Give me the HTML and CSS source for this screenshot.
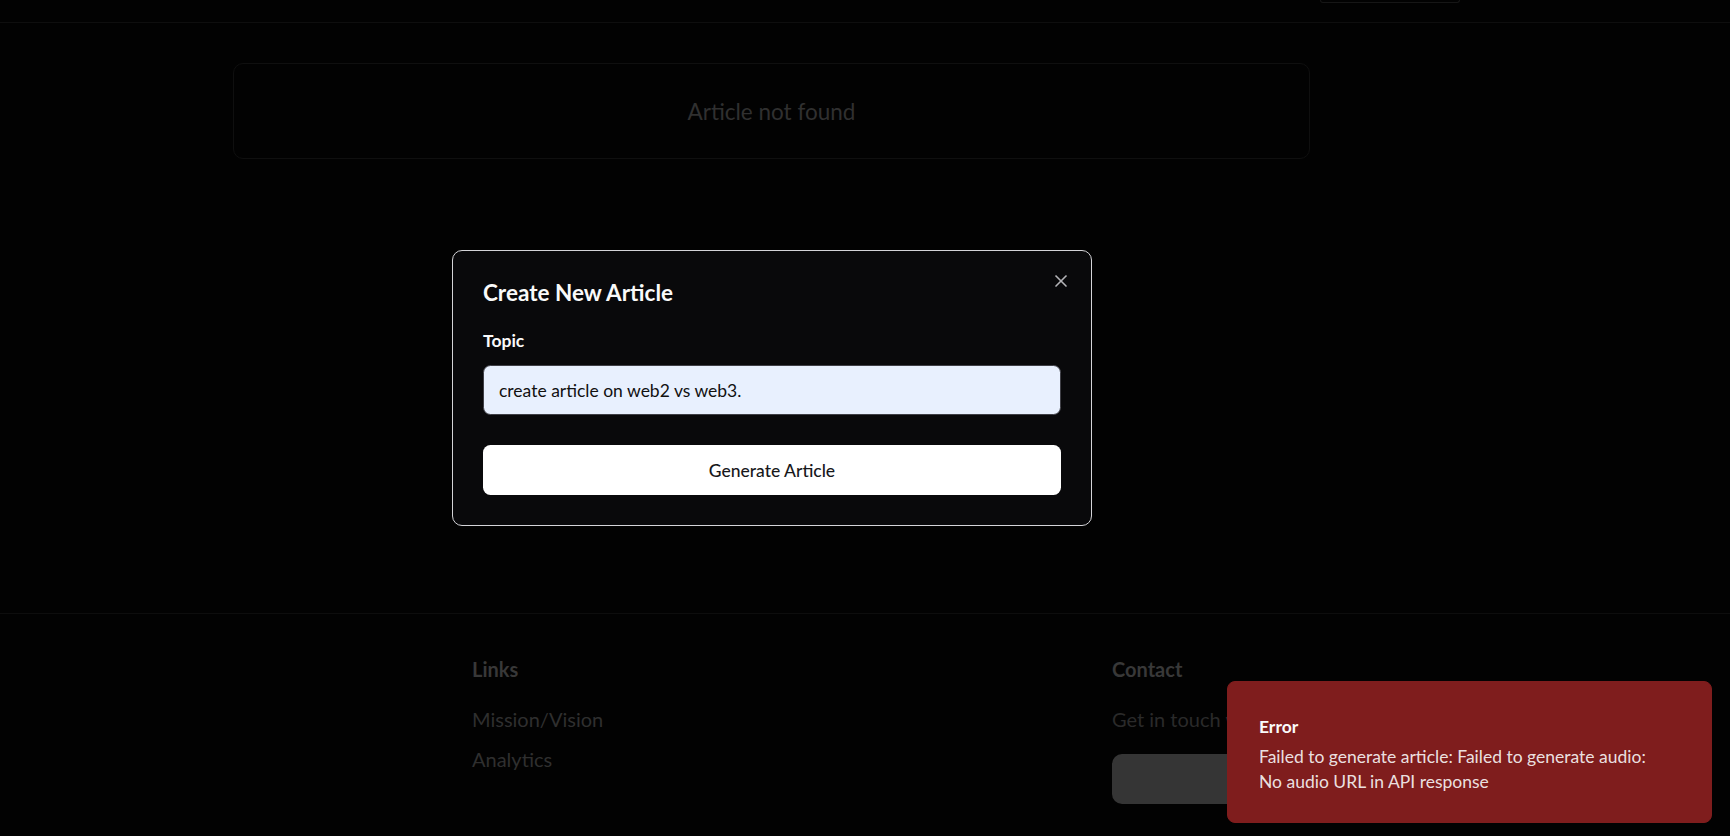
FILE: index.html
```html
<!DOCTYPE html>
<html lang="en">
<head>
<meta charset="utf-8">
<title>Create New Article</title>
<link rel="stylesheet" href="styles.css">
</head>
<body>
<header class="topbar">
  <div class="top-btn"></div>
</header>
<main class="main">
  <div class="card">Article not found</div>
</main>
<footer class="footer">
  <div class="footer-col">
    <h3 class="footer-title">Links</h3>
    <a class="footer-link" href="#">Mission/Vision</a>
    <a class="footer-link" href="#">Analytics</a>
  </div>
  <div class="footer-col">
    <h3 class="footer-title">Contact</h3>
    <p class="footer-text">Get in touch with us</p>
    <div class="footer-btn"></div>
  </div>
</footer>

<div class="modal" role="dialog">
  <h2 class="modal-title">Create New Article</h2>
  <form class="modal-form">
    <label class="label" for="topic">Topic</label>
    <input class="input" id="topic" type="text" value="create article on web2 vs web3.">
    <button class="btn" type="button">Generate Article</button>
  </form>
  <button class="close" type="button" aria-label="Close">
    <svg viewBox="0 0 24 24" width="20" height="20" fill="none" stroke="currentColor" stroke-width="2" stroke-linecap="round" stroke-linejoin="round"><path d="M18 6 6 18"/><path d="m6 6 12 12"/></svg>
  </button>
</div>

<div class="toast">
  <div class="toast-title">Error</div>
  <div class="toast-desc">Failed to generate article: Failed to generate audio: No audio URL in API response</div>
</div>
</body>
</html>
```
FILE: styles.css
```css
* { box-sizing: border-box; }
html, body { margin: 0; padding: 0; }
body {
  background: #020202;
  font-family: "Lato", "Noto Sans", sans-serif;
  color: #fafafa;
  width: 1730px;
  height: 836px;
  overflow: hidden;
}
.topbar {
  height: 23px;
  border-bottom: 1px solid #0e0e0e;
  display: flex;
  justify-content: flex-end;
  padding-right: 270px;
}
.top-btn {
  width: 140px;
  height: 3px;
  border: 1px solid #161616;
  border-top: none;
  border-radius: 0 0 6px 6px;
}
.main {
  height: 590px;
  padding: 40px 0 0 233px;
}
.card {
  width: 1077px;
  height: 96px;
  border: 1px solid #0f0f0f;
  border-radius: 10px;
  display: flex;
  align-items: center;
  justify-content: center;
  color: #303030;
  font-size: 22.5px;
}
.footer {
  border-top: 1px solid #0d0d0d;
  padding: 40px 0 0 472px;
  display: grid;
  grid-template-columns: 640px 400px;
}
.footer-col { display: flex; flex-direction: column; align-items: flex-start; }
.footer-title {
  margin: 0 0 20px;
  font-size: 20px;
  line-height: 30px;
  font-weight: 700;
  color: #383838;
}
.footer-link {
  font-size: 20px;
  line-height: 30px;
  color: #2f2f2f;
  text-decoration: none;
  margin-bottom: 10px;
}
.footer-text {
  margin: 0 0 20px;
  font-size: 20px;
  line-height: 30px;
  color: #2a2a2a;
}
.footer-btn {
  width: 300px;
  height: 50px;
  border-radius: 10px;
  background: #353535;
}
.modal {
  position: fixed;
  left: 452px;
  top: 250px;
  width: 640px;
  padding: 30px;
  background: #09090b;
  border: 1px solid #d4d4d8;
  border-radius: 10px;
}
.modal-title {
  margin: 0;
  font-size: 22.5px;
  line-height: 24px;
  font-weight: 700;
  color: #fafafa;
}
.modal-form { display: flex; flex-direction: column; margin-top: 27px; }
.label {
  font-size: 17.5px;
  line-height: 17.5px;
  font-weight: 700;
  color: #fafafa;
}
.input {
  margin-top: 15.5px;
  height: 50px;
  width: 100%;
  border: 1px solid #3f3f46;
  border-radius: 7.5px;
  background: #e8f0fe;
  color: #111;
  font-family: inherit;
  font-size: 17.5px;
  padding: 0 15px;
  outline: none;
}
.btn {
  margin-top: 30px;
  height: 50px;
  width: 100%;
  border: none;
  border-radius: 7.5px;
  background: #ffffff;
  color: #18181b;
  font-family: inherit;
  font-size: 17.5px;
  font-weight: 500;
}
.close {
  position: absolute;
  top: 20px;
  right: 20px;
  width: 20px;
  height: 20px;
  padding: 0;
  border: none;
  background: none;
  color: #b4b4b8;
  display: flex;
}
.toast {
  position: fixed;
  right: 18px;
  bottom: 13px;
  width: 485px;
  padding: 32px 40px 28px 31px;
  background: #7f1d1d;
  border: 1px solid #7f1d1d;
  border-radius: 8px;
  display: flex;
  flex-direction: column;
  gap: 5px;
}
.toast-title {
  font-size: 17.5px;
  line-height: 25px;
  font-weight: 700;
  color: #fafafa;
}
.toast-desc {
  font-size: 17.5px;
  line-height: 25px;
  color: rgba(250, 250, 250, 0.9);
}
```
